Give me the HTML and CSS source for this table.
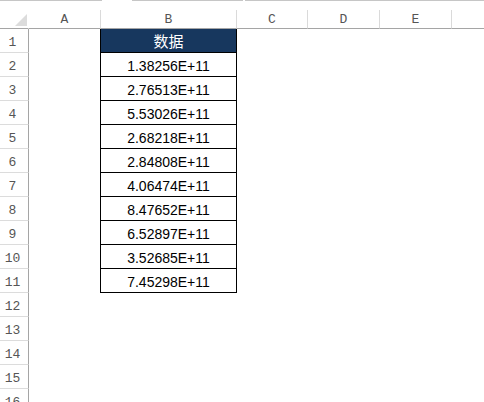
FILE: index.html
```html
<!DOCTYPE html>
<html lang="zh">
<head>
<meta charset="utf-8">
<link rel="stylesheet" href="styles.css">
</head>
<body>
<div class="topbar">
  <span class="seg seg1"></span>
  <span class="seg seg2"></span>
  <span class="seg seg3"></span>
</div>
<div class="sheet">
  <div class="ch corner"><svg class="tri" width="12" height="12" viewBox="0 0 12 12"><polygon points="12,0 12,12 0,12" fill="#dcdcdc"/></svg></div>
  <div class="ch">A</div>
  <div class="ch">B</div>
  <div class="ch">C</div>
  <div class="ch">D</div>
  <div class="ch">E</div>
  <div class="ch last"></div>

  <div class="rh">1</div><div class="c"></div><div class="c b head">数据</div><div class="c"></div><div class="c"></div><div class="c"></div><div class="c"></div>
  <div class="rh">2</div><div class="c"></div><div class="c b">1.38256E+11</div><div class="c"></div><div class="c"></div><div class="c"></div><div class="c"></div>
  <div class="rh">3</div><div class="c"></div><div class="c b">2.76513E+11</div><div class="c"></div><div class="c"></div><div class="c"></div><div class="c"></div>
  <div class="rh">4</div><div class="c"></div><div class="c b">5.53026E+11</div><div class="c"></div><div class="c"></div><div class="c"></div><div class="c"></div>
  <div class="rh">5</div><div class="c"></div><div class="c b">2.68218E+11</div><div class="c"></div><div class="c"></div><div class="c"></div><div class="c"></div>
  <div class="rh">6</div><div class="c"></div><div class="c b">2.84808E+11</div><div class="c"></div><div class="c"></div><div class="c"></div><div class="c"></div>
  <div class="rh">7</div><div class="c"></div><div class="c b">4.06474E+11</div><div class="c"></div><div class="c"></div><div class="c"></div><div class="c"></div>
  <div class="rh">8</div><div class="c"></div><div class="c b">8.47652E+11</div><div class="c"></div><div class="c"></div><div class="c"></div><div class="c"></div>
  <div class="rh">9</div><div class="c"></div><div class="c b">6.52897E+11</div><div class="c"></div><div class="c"></div><div class="c"></div><div class="c"></div>
  <div class="rh">10</div><div class="c"></div><div class="c b">3.52685E+11</div><div class="c"></div><div class="c"></div><div class="c"></div><div class="c"></div>
  <div class="rh">11</div><div class="c"></div><div class="c b">7.45298E+11</div><div class="c"></div><div class="c"></div><div class="c"></div><div class="c"></div>
  <div class="rh">12</div><div class="c"></div><div class="c"></div><div class="c"></div><div class="c"></div><div class="c"></div><div class="c"></div>
  <div class="rh">13</div><div class="c"></div><div class="c"></div><div class="c"></div><div class="c"></div><div class="c"></div><div class="c"></div>
  <div class="rh">14</div><div class="c"></div><div class="c"></div><div class="c"></div><div class="c"></div><div class="c"></div><div class="c"></div>
  <div class="rh">15</div><div class="c"></div><div class="c"></div><div class="c"></div><div class="c"></div><div class="c"></div><div class="c"></div>
  <div class="rh">16</div><div class="c"></div><div class="c"></div><div class="c"></div><div class="c"></div><div class="c"></div><div class="c"></div>
</div>
</body>
</html>
```
FILE: styles.css
```css
html, body {
  margin: 0;
  padding: 0;
  background: #ffffff;
  overflow: hidden;
}
body {
  width: 484px;
  height: 402px;
  font-family: "Liberation Sans", Arial, sans-serif;
}
.topbar {
  display: flex;
  height: 1px;
  margin-bottom: 9px;
}
.seg {
  display: block;
  height: 1px;
  background: #c6c6c6;
}
.seg1 { width: 102px; }
.seg2 { width: 111px; margin-left: 30px; }
.seg3 { flex: 1; margin-left: 2px; }

.sheet {
  display: grid;
  grid-template-columns: 29px 72px 136px 71px 72px 72px 1fr;
  grid-template-rows: 19px repeat(16, 24px);
}
.ch {
  box-sizing: border-box;
  border-bottom: 1px solid #a5a5a5;
  border-right: 1px solid #dadada;
  display: flex;
  align-items: flex-end;
  justify-content: center;
  padding-bottom: 1px;
  font-family: "Liberation Mono", "DejaVu Sans Mono", monospace;
  font-size: 13px;
  color: #555555;
  line-height: 15px;
}
.ch.corner {
  border-right-color: #ffffff;
  position: relative;
}
.ch.last { border-right: none; }
.tri {
  position: absolute;
  left: 15px;
  top: 4px;
}
.rh {
  box-sizing: border-box;
  border-right: 1px solid #a5a5a5;
  border-bottom: 1px solid #dcdcdc;
  display: flex;
  align-items: flex-end;
  justify-content: center;
  padding-right: 3px;
  padding-bottom: 2px;
  font-family: "Liberation Mono", "DejaVu Sans Mono", monospace;
  font-size: 13px;
  color: #555555;
  line-height: 15px;
}
.c {
  box-sizing: border-box;
}
.c.b {
  margin-left: -1px;
  border-left: 1px solid #000000;
  border-right: 1px solid #000000;
  border-bottom: 1px solid #000000;
  display: flex;
  align-items: center;
  justify-content: center;
  padding-top: 2px;
  font-size: 14px;
  color: #000000;
}
.c.b.head {
  background: #17375e;
  color: #ffffff;
  font-family: "Noto Sans CJK SC", "Liberation Sans", sans-serif;
  font-size: 15px;
  padding-top: 0;
}
```
